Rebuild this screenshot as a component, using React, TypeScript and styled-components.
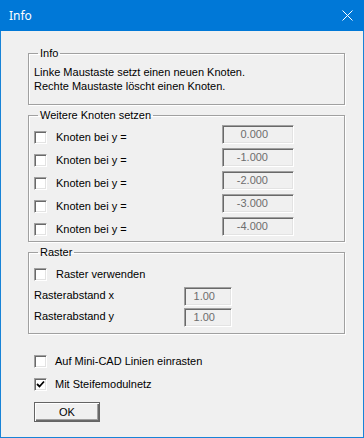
import React from 'react';
import styled, { createGlobalStyle } from 'styled-components';

const Global = createGlobalStyle`
  html, body { margin: 0; padding: 0; background: #f0f0f0; }
  body {
    font-family: "Liberation Sans", Arial, sans-serif;
    font-size: 11px;
    color: #000;
  }
`;

const Window = styled.div`
  width: 364px;
  height: 438px;
  display: flex;
  flex-direction: column;
  background: #f0f0f0;
`;

const TitleBar = styled.div`
  height: 31px;
  flex: none;
  background: #0078d7;
  color: #fff;
  display: flex;
  align-items: center;
  justify-content: space-between;
  padding: 0 11px 0 9px;
  font-family: "Noto Sans", "Open Sans", sans-serif;
  font-size: 12px;
`;

const TitleText = styled.span`
  line-height: 16px;
`;

const Body = styled.div`
  flex: 1;
  border: 1px solid #1883d7;
  border-top: none;
  padding: 16px 0 0 27px;
  display: flex;
  flex-direction: column;
  align-items: flex-start;
`;

const Group = styled.fieldset<{ $mt: number; $pt: number; $pb: number }>`
  margin: ${p => p.$mt}px 0 0 0;
  padding: ${p => p.$pt}px 0 ${p => p.$pb}px 5px;
  width: 317px;
  box-sizing: border-box;
  min-width: 0;
  border: 1px solid #a0a0a0;
  box-shadow: 1px 1px 0 #fff, inset 1px 1px 0 #fff;
`;

const Legend = styled.legend`
  padding: 0 2px;
  margin-left: 4px;
  line-height: 13px;
`;

const InfoLine = styled.div`
  line-height: 14px;
  white-space: nowrap;
`;

const Rows = styled.div<{ $gap: number; $mt?: number }>`
  display: flex;
  flex-direction: column;
  gap: ${p => p.$gap}px;
  margin-top: ${p => p.$mt ?? 0}px;
`;

const Row = styled.div`
  display: flex;
  align-items: flex-start;
  height: 19px;
`;

const CheckItem = styled.label<{ $mt?: number; $gap?: number }>`
  display: flex;
  align-items: center;
  gap: ${p => p.$gap ?? 9}px;
  margin-top: ${p => p.$mt ?? 0}px;
  line-height: 14px;
  white-space: nowrap;
`;

const Box = styled.span`
  width: 13px;
  height: 13px;
  box-sizing: border-box;
  flex: none;
  background: #fff;
  border: 1px solid;
  border-color: #a0a0a0 #fff #fff #a0a0a0;
  box-shadow: inset 1px 1px 0 #696969, inset -1px -1px 0 #e3e3e3;
  display: flex;
  align-items: center;
  justify-content: center;
`;

const FieldLabel = styled.span<{ $w: number }>`
  width: ${p => p.$w}px;
  flex: none;
  line-height: 14px;
  margin-top: 1px;
  white-space: nowrap;
`;

const ValueBox = styled.div<{ $w: number; $pr: number; $push?: boolean; $mr?: number }>`
  width: ${p => p.$w}px;
  height: 19px;
  box-sizing: border-box;
  margin-left: ${p => (p.$push ? 'auto' : '0')};
  margin-right: ${p => p.$mr ?? 0}px;
  background: #f0f0f0;
  border: 1px solid;
  border-color: #a0a0a0 #fff #fff #a0a0a0;
  box-shadow: inset 1px 1px 0 #696969, inset -1px -1px 0 #e3e3e3;
  color: #6d6d6d;
  text-align: right;
  padding-right: ${p => p.$pr}px;
  line-height: 17px;
  white-space: nowrap;
`;

const Standalone = styled.div<{ $mt: number }>`
  margin-top: ${p => p.$mt}px;
  padding-left: 6px;
`;

const Button = styled.button`
  margin: 11px 0 0 6px;
  width: 66px;
  height: 20px;
  box-sizing: border-box;
  padding: 0;
  font-family: "Liberation Sans", Arial, sans-serif;
  font-size: 11px;
  color: #000;
  background: #f0f0f0;
  border: 1px solid #646464;
  box-shadow: inset 1px 1px 0 #fff, inset -1px -1px 0 #696969, inset -2px -2px 0 #a0a0a0;
  line-height: 17px;
`;

const Check: React.FC<{ checked?: boolean }> = ({ checked }) => (
  <Box>
    {checked && (
      <svg width="9" height="9" viewBox="0 0 9 9">
        <polyline points="1,4 3.5,6.5 8,1.5" fill="none" stroke="#000" strokeWidth="1.8" />
      </svg>
    )}
  </Box>
);

const knoten = ['0.000', '-1.000', '-2.000', '-3.000', '-4.000'];

export default function App() {
  return (
    <>
      <Global />
      <Window>
        <TitleBar>
          <TitleText>Info</TitleText>
          <svg width="11" height="11" viewBox="0 0 11 11">
            <path d="M0.5 0.5 L10.5 10.5 M10.5 0.5 L0.5 10.5" stroke="#fff" strokeWidth="1" />
          </svg>
        </TitleBar>
        <Body>
          <Group $mt={0} $pt={5} $pb={11}>
            <Legend>Info</Legend>
            <InfoLine>Linke Maustaste setzt einen neuen Knoten.</InfoLine>
            <InfoLine>Rechte Maustaste löscht einen Knoten.</InfoLine>
          </Group>

          <Group $mt={4} $pt={3} $pb={5}>
            <Legend>Weitere Knoten setzen</Legend>
            <Rows $gap={4}>
              {knoten.map(v => (
                <Row key={v}>
                  <CheckItem $mt={5}>
                    <Check />
                    <span>Knoten bei y =</span>
                  </CheckItem>
                  <ValueBox $w={72} $pr={25} $push $mr={50}>
                    {v}
                  </ValueBox>
                </Row>
              ))}
            </Rows>
          </Group>

          <Group $mt={4} $pt={8} $pb={6}>
            <Legend>Raster</Legend>
            <CheckItem>
              <Check />
              <span>Raster verwenden</span>
            </CheckItem>
            <Rows $gap={2} $mt={6}>
              <Row>
                <FieldLabel $w={150}>Rasterabstand x</FieldLabel>
                <ValueBox $w={48} $pr={16}>1.00</ValueBox>
              </Row>
              <Row>
                <FieldLabel $w={150}>Rasterabstand y</FieldLabel>
                <ValueBox $w={48} $pr={16}>1.00</ValueBox>
              </Row>
            </Rows>
          </Group>

          <Standalone $mt={20}>
            <CheckItem $gap={8}>
              <Check />
              <span>Auf Mini-CAD Linien einrasten</span>
            </CheckItem>
          </Standalone>
          <Standalone $mt={9}>
            <CheckItem $gap={8}>
              <Check checked />
              <span>Mit Steifemodulnetz</span>
            </CheckItem>
          </Standalone>
          <Button>OK</Button>
        </Body>
      </Window>
    </>
  );
}
